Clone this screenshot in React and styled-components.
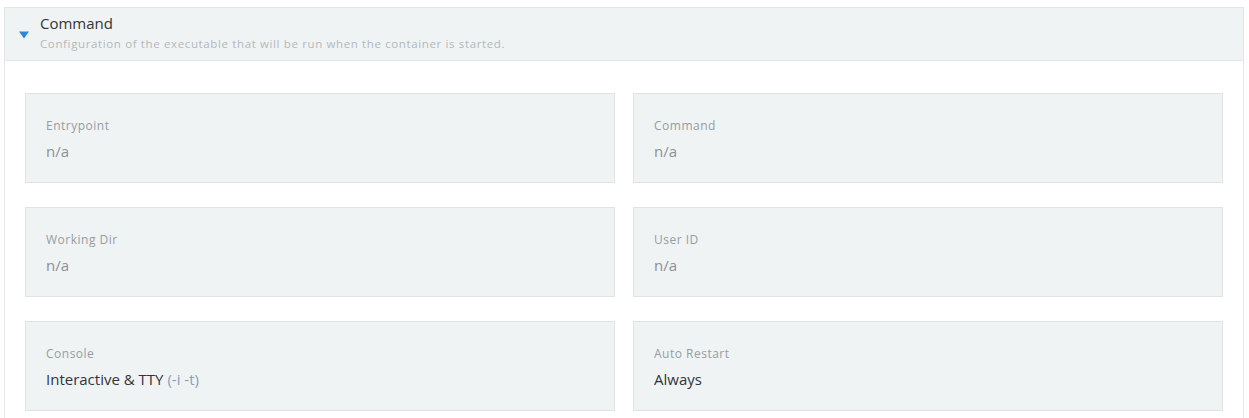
import React from "react";
import styled, { createGlobalStyle } from "styled-components";

const Global = createGlobalStyle`
  html, body { margin: 0; padding: 0; background: #fff; }
  body { font-family: "Open Sans", "Liberation Sans", sans-serif; }
  * { box-sizing: border-box; }
`;

const Page = styled.div`
  padding: 7px 5px 0 4px;
`;

const Section = styled.section`
  border: 1px solid #e2e6e8;
  border-bottom: none;
  background: #fff;
`;

const Header = styled.div`
  display: flex;
  align-items: center;
  gap: 11px;
  height: 53px;
  padding: 0 0 0 14px;
  background: #f0f3f4;
  border-bottom: 1px solid #e2e6e8;
`;

const Caret = styled.svg`
  width: 10px;
  height: 8px;
  margin-top: 1px;
  flex: none;
`;

const Titles = styled.div`
  display: flex;
  flex-direction: column;
  margin-top: -3px;
`;

const Title = styled.div`
  font-size: 15px;
  line-height: 20px;
  color: #333;
`;

const Sub = styled.div`
  font-size: 11.5px;
  line-height: 16px;
  margin-top: 3px;
  letter-spacing: 0.63px;
  color: #b3b8bc;
`;

const Body = styled.div`
  display: grid;
  grid-template-columns: 590px 590px;
  column-gap: 18px;
  row-gap: 24px;
  padding: 32px 20px 8px 20px;
`;

const Card = styled.div`
  height: 90px;
  background: #f0f3f4;
  border: 1px solid #dfe3e5;
  padding: 24px 20px 0 20px;
`;

const Label = styled.div`
  font-size: 12px;
  line-height: 16px;
  letter-spacing: 0.5px;
  color: #979ca1;
`;

const Value = styled.div`
  margin-top: 7px;
  font-size: 15px;
  line-height: 20px;
  color: ${(p) => (p.$empty ? "#8c9196" : "#30343a")};
`;

const Muted = styled.span`
  color: #8a9eb8;
`;

const fields = [
  { label: "Entrypoint", value: "n/a", empty: true },
  { label: "Command", value: "n/a", empty: true },
  { label: "Working Dir", value: "n/a", empty: true },
  { label: "User ID", value: "n/a", empty: true },
  {
    label: "Console",
    value: (
      <>
        Interactive &amp; TTY <Muted>(-i -t)</Muted>
      </>
    ),
  },
  { label: "Auto Restart", value: "Always" },
];

export default function App() {
  return (
    <>
      <Global />
      <Page>
        <Section>
          <Header>
            <Caret viewBox="0 0 10 8">
              <path d="M0 0.5 L10 0.5 L5 7.5 Z" fill="#2f86d6" />
            </Caret>
            <Titles>
              <Title>Command</Title>
              <Sub>Configuration of the executable that will be run when the container is started.</Sub>
            </Titles>
          </Header>
          <Body>
            {fields.map((f) => (
              <Card key={f.label}>
                <Label>{f.label}</Label>
                <Value $empty={f.empty}>{f.value}</Value>
              </Card>
            ))}
          </Body>
        </Section>
      </Page>
    </>
  );
}
